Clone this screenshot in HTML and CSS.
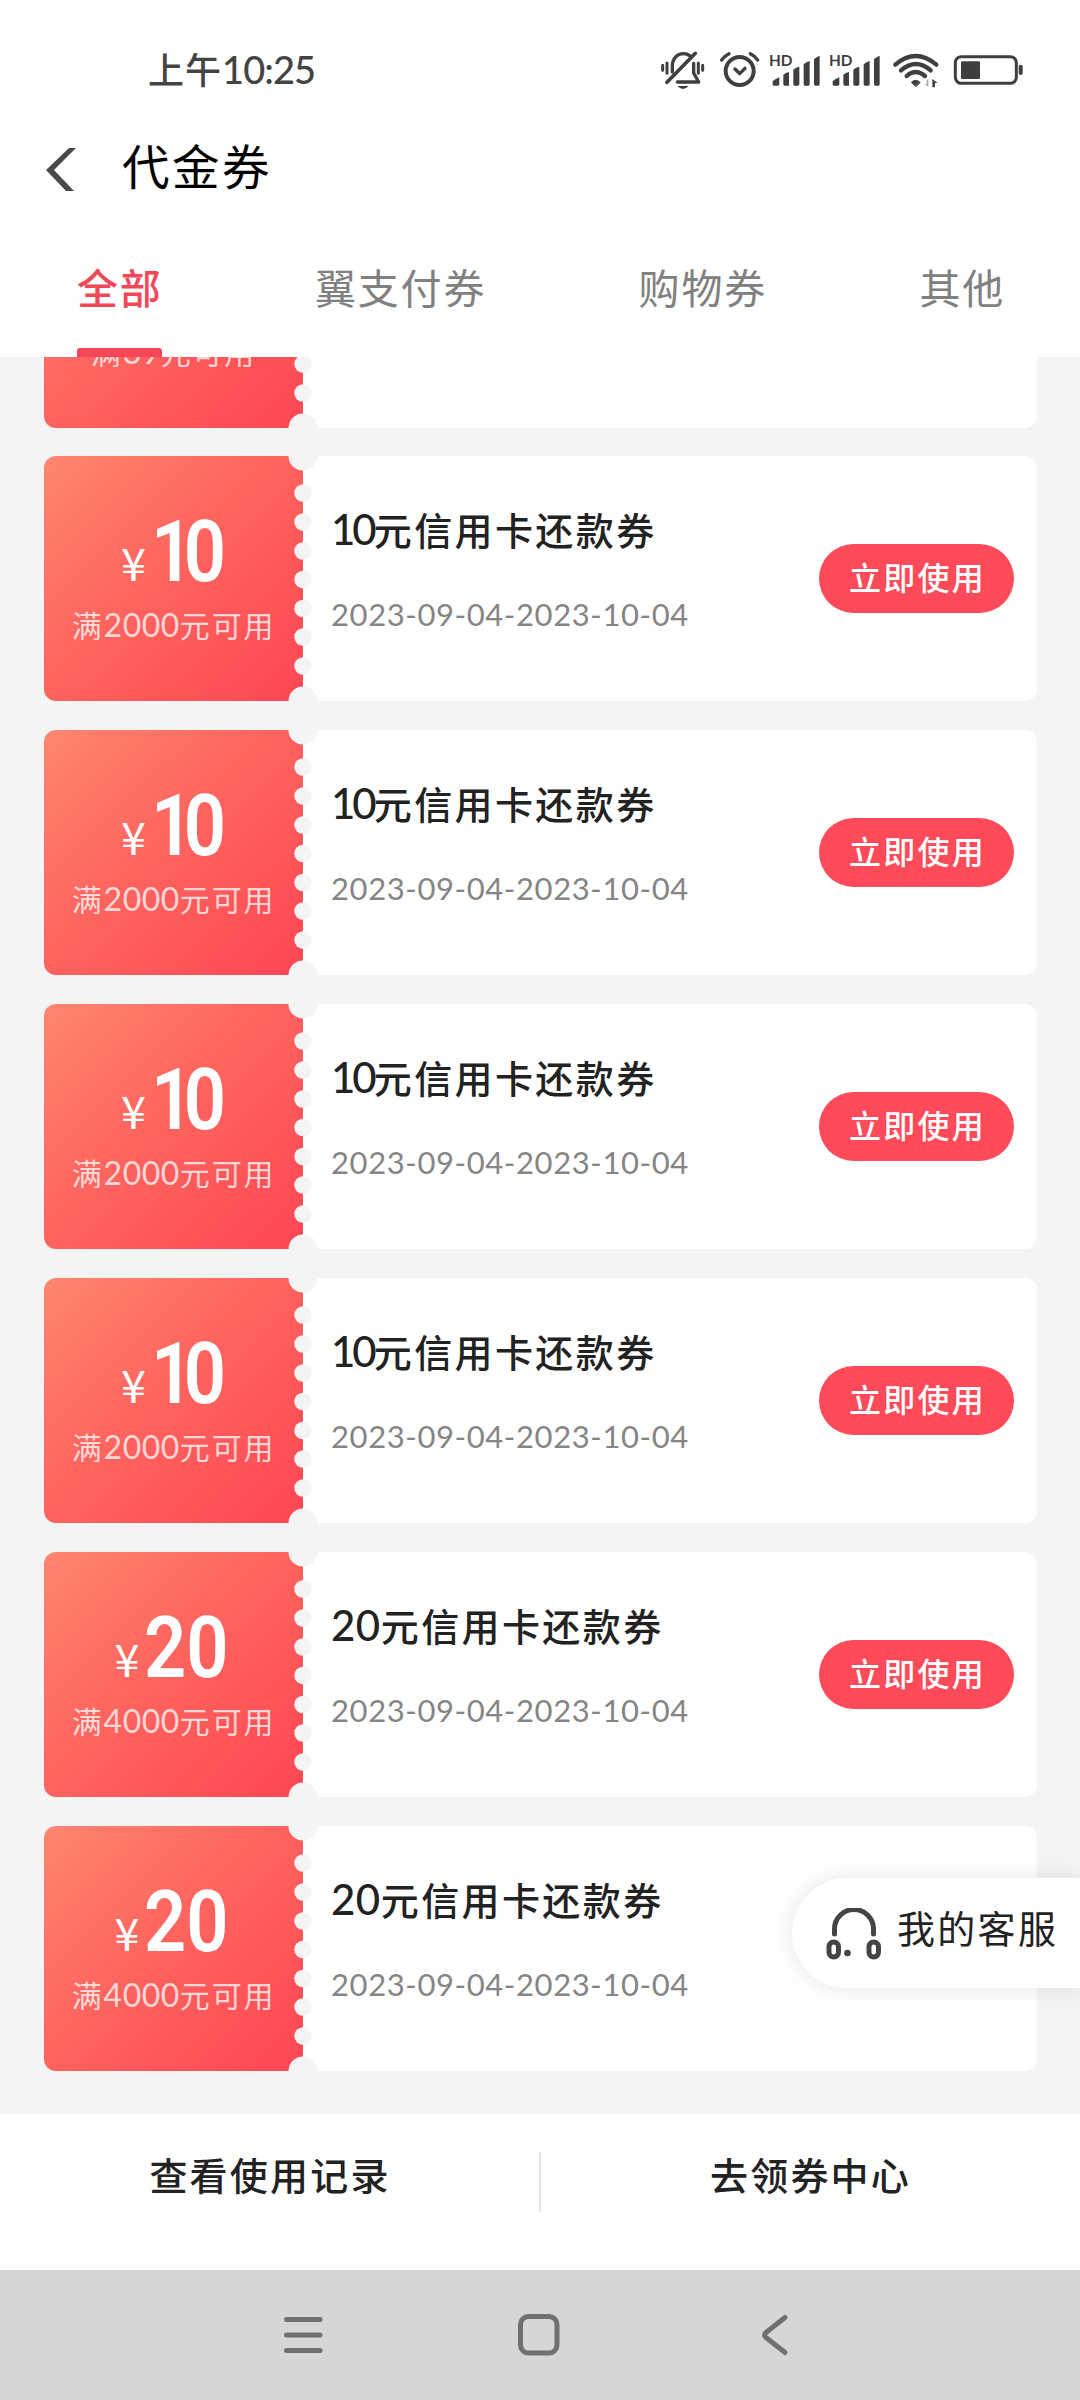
FILE: index.html
```html
<!DOCTYPE html>
<html lang="zh-CN">
<head>
<meta charset="utf-8">
<title>代金券</title>
<link rel="stylesheet" href="styles.css">
</head>
<body>
<div class="screen">
  <header class="status">
    <div class="time">上午<span class="clock">10:25</span></div>
    <svg class="status-icons" viewBox="0 0 1200 240" fill="none" stroke="#3f3f3f" stroke-linecap="round" stroke-linejoin="round">
      <g stroke-width="10">
        <path d="M68 106v15M81 99v31M175 99v31M188 106v15" stroke-width="9"/>
        <path d="M97 126v-18c0-22 14-37 33-37 8 0 14 2 19 6"/>
        <path d="M166 70L81 157" stroke-width="11"/>
        <path d="M161 100v29l15 27h-64"/>
        <path d="M112 168h34q-17 18-34 0z" fill="#3f3f3f" stroke="none"/>
      </g>
      <circle cx="299" cy="123" r="42" stroke-width="12"/>
      <path d="M285 117l14 14 16-16" stroke-width="10"/>
      <path d="M245 90q8-12 22-19M353 90q-8-12-22-19" stroke-width="10"/>
      <g fill="#3f3f3f" stroke="none">
        <g id="signal">
          <text class="hd" x="387" y="107">HD</text>
          <path d="M398 154q8-8 20-12v21q0 4-4 4h-12q-4 0-4-4zM430 134q7-6 17-8v41h-13q-4 0-4-4zM460 119q7-7 18-9v53q0 4-4 4h-10q-4 0-4-4zM491 103q8-8 18-10v70q0 4-4 4h-10q-4 0-4-4zM522 88q7-8 17-11v86q0 4-4 4h-9q-4 0-4-4z"/>
        </g>
        <use href="#signal" x="180"/>
        <path d="M827 169l-13-12q13-13 26 0z" stroke="#3f3f3f" stroke-width="3"/>
        <path d="M865 147v24l-12-9h7v-12z" fill="#aaa"/>
        <path d="M877 172v-25l16 12h-8v13z"/>
      </g>
      <path d="M766 104q61-52 123 0M783 121q45-38 89 0M800 138q27-24 55 0" stroke-width="13"/>
      <rect x="946" y="80" width="183" height="80" rx="18" stroke-width="9"/>
      <rect x="963" y="94" width="57" height="53" rx="4" fill="#3f3f3f" stroke="none"/>
      <path d="M1142 110v19" stroke-width="12"/>
    </svg>
  </header>

  <div class="titlebar">
    <svg class="back" viewBox="0 0 30 44"><path d="M23 0h7L8 22l20 21h-8L0 22z"/></svg>
    <h1>代金券</h1>
  </div>

  <nav class="tabs">
    <a class="tab active">全部</a>
    <a class="tab">翼支付券</a>
    <a class="tab">购物券</a>
    <a class="tab">其他</a>
  </nav>

  <svg class="defs" width="0" height="0">
    <defs>
      <symbol id="perforation" viewBox="0 0 30 245">
        <g fill="#f4f4f4">
          <circle cx="15" cy="0" r="14.5"/><circle cx="15" cy="245" r="14.5"/>
          <circle cx="15" cy="37" r="8.7"/><circle cx="15" cy="66" r="8.7"/>
          <circle cx="15" cy="95" r="8.7"/><circle cx="15" cy="123.500" r="8.7"/>
          <circle cx="15" cy="152.500" r="8.7"/><circle cx="15" cy="181" r="8.7"/>
          <circle cx="15" cy="210" r="8.7"/>
        </g>
      </symbol>
    </defs>
  </svg>

  <main class="list">
    <article class="coupon">
      <div class="value"><div class="amount"></div><div class="cond">满<span>39</span>元可用</div></div>
      <svg class="perf"><use href="#perforation"/></svg>
    </article>
    <article class="coupon ten">
      <div class="value"><div class="amount"><i>¥</i><b>10</b></div><div class="cond">满<span>2000</span>元可用</div></div>
      <svg class="perf"><use href="#perforation"/></svg>
      <div class="info"><h2><span>10</span>元信用卡还款券</h2><p>2023-09-04-2023-10-04</p></div>
      <button class="use">立即使用</button>
    </article>
    <article class="coupon ten">
      <div class="value"><div class="amount"><i>¥</i><b>10</b></div><div class="cond">满<span>2000</span>元可用</div></div>
      <svg class="perf"><use href="#perforation"/></svg>
      <div class="info"><h2><span>10</span>元信用卡还款券</h2><p>2023-09-04-2023-10-04</p></div>
      <button class="use">立即使用</button>
    </article>
    <article class="coupon ten">
      <div class="value"><div class="amount"><i>¥</i><b>10</b></div><div class="cond">满<span>2000</span>元可用</div></div>
      <svg class="perf"><use href="#perforation"/></svg>
      <div class="info"><h2><span>10</span>元信用卡还款券</h2><p>2023-09-04-2023-10-04</p></div>
      <button class="use">立即使用</button>
    </article>
    <article class="coupon ten">
      <div class="value"><div class="amount"><i>¥</i><b>10</b></div><div class="cond">满<span>2000</span>元可用</div></div>
      <svg class="perf"><use href="#perforation"/></svg>
      <div class="info"><h2><span>10</span>元信用卡还款券</h2><p>2023-09-04-2023-10-04</p></div>
      <button class="use">立即使用</button>
    </article>
    <article class="coupon">
      <div class="value"><div class="amount"><i>¥</i><b>20</b></div><div class="cond">满<span>4000</span>元可用</div></div>
      <svg class="perf"><use href="#perforation"/></svg>
      <div class="info"><h2><span>20</span>元信用卡还款券</h2><p>2023-09-04-2023-10-04</p></div>
      <button class="use">立即使用</button>
    </article>
    <article class="coupon">
      <div class="value"><div class="amount"><i>¥</i><b>20</b></div><div class="cond">满<span>4000</span>元可用</div></div>
      <svg class="perf"><use href="#perforation"/></svg>
      <div class="info"><h2><span>20</span>元信用卡还款券</h2><p>2023-09-04-2023-10-04</p></div>
    </article>
  </main>

  <footer class="actions">
    <a>查看使用记录</a>
    <a>去领券中心</a>
  </footer>

  <div class="sysnav">
    <svg viewBox="0 0 1080 130" fill="none" stroke="#707070" stroke-width="5" stroke-linecap="round" stroke-linejoin="round">
      <path d="M286.500 49.500h33.500M286.500 65h33.500M286.500 80.500h33.500"/>
      <rect x="520.500" y="46.500" width="36.500" height="36.500" rx="8"/>
      <path d="M785 47.500L766 62.500q-3 2.500 0 5L785 82.500"/>
    </svg>
  </div>

  <aside class="service">
    <svg viewBox="0 0 56 54" fill="none" stroke="#444" stroke-width="5" stroke-linecap="round">
      <path d="M8.500 26v-5a19.500 19.500 0 0 1 39 0v5"/>
      <rect x="3" y="34" width="9.500" height="15" rx="4.700"/>
      <rect x="43" y="34" width="9.500" height="15" rx="4.700"/>
      <circle cx="21.500" cy="45" r="3.300" fill="#444" stroke="none"/>
    </svg>
    <span>我的客服</span>
  </aside>
</div>
</body>
</html>
```
FILE: styles.css
```css
* { box-sizing: border-box; }
body {
  margin: 0;
  background: #fff;
  font-family: Lato, "Noto Sans CJK SC", sans-serif;
}
h1, h2, p { margin: 0; }
.screen {
  position: relative;
  width: 1080px;
  height: 2400px;
  overflow: hidden;
  display: flex;
  flex-direction: column;
  color: #222;
}
.defs { position: absolute; }

.status {
  height: 110px;
  flex: none;
  display: flex;
  justify-content: space-between;
  padding: 30px 40px 0 148px;
}
.time {
  font-size: 36px;
  line-height: 78px;
  letter-spacing: 1px;
  font-weight: 500;
  color: #444;
  white-space: nowrap;
}
.clock { font-size: 38px; letter-spacing: -0.9px; }
.status-icons { width: 400px; height: 80px; }
.hd { font: 700 46px Lato, sans-serif; }

.titlebar {
  height: 114px;
  flex: none;
  display: flex;
  align-items: center;
  padding-left: 46px;
}
.back { width: 30px; height: 44px; fill: #4a4a4a; margin-top: 5px; }
.titlebar h1 {
  margin-left: 46px;
  font-size: 47.5px;
  line-height: 60px;
  letter-spacing: 2.5px;
  font-weight: 400;
  color: #000;
}

.tabs {
  height: 133px;
  flex: none;
  display: flex;
  justify-content: space-between;
  padding: 0 75px 0 77px;
  background: #fff;
}
.tab {
  position: relative;
  font-size: 41px;
  line-height: 129px;
  letter-spacing: 1.8px;
  color: #808080;
}
.tab.active { color: #f04858; font-weight: 500; }
.tab.active::after {
  content: "";
  position: absolute;
  left: 0;
  right: 1px;
  bottom: 0;
  height: 9px;
  border-radius: 3px 3px 0 0;
  background: #f54758;
}

.list {
  height: 1757px;
  flex: none;
  overflow: hidden;
  background: #f4f4f4;
  padding: 0 43px 0 44px;
  display: flex;
  flex-direction: column;
  gap: 29px;
}
.coupon {
  position: relative;
  flex: none;
  height: 245px;
  display: flex;
  background: #fff;
  border-radius: 12px;
}
.coupon:first-child { margin-top: -174px; margin-bottom: -1px; }
.value {
  width: 259px;
  border-radius: 12px 0 0 12px;
  background: linear-gradient(135deg, #ff866e 0%, #ff6760 42%, #ff4653 100%);
  color: #fff;
  display: flex;
  flex-direction: column;
  align-items: center;
  padding: 56px 3px 0 0;
}
.amount {
  height: 80px;
  display: flex;
  align-items: baseline;
  line-height: 80px;
}
.amount i {
  font: 400 45px/80px "Noto Sans CJK SC", sans-serif;
  margin-right: 5px;
}
.amount b {
  width: 85px;
  font: 600 86px/80px Roboto, sans-serif;
  transform: scaleX(0.86);
  transform-origin: left;
}
.ten .amount b { width: 72px; letter-spacing: -11px; }
.cond {
  margin: 13px 0 0 3px;
  font-size: 30px;
  line-height: 40px;
  letter-spacing: 1.8px;
  color: rgba(255, 255, 255, 0.76);
  white-space: nowrap;
}
.cond span { font-size: 32px; letter-spacing: 0.5px; }
.perf {
  position: absolute;
  left: 243.5px;
  top: 0;
  width: 30px;
  height: 245px;
}
.info { flex: 1; padding: 48px 0 0 28px; }
.info h2 {
  font-size: 38px;
  line-height: 50px;
  letter-spacing: 2.4px;
  font-weight: 500;
  color: #222;
  white-space: nowrap;
}
.info h2 span { font-size: 42px; letter-spacing: 0.5px; }
.ten .info h2 span { letter-spacing: -3px; }
.info p {
  margin-top: 39px;
  font-size: 31px;
  line-height: 40px;
  letter-spacing: 0.6px;
  color: #858585;
}
.use {
  flex: none;
  width: 195px;
  height: 69px;
  margin: 88px 23px 0 0;
  padding: 0 0 2px 2px;
  border: 0;
  border-radius: 35px;
  background: #ff4b59;
  color: #fff;
  font: 500 32px/67px Lato, "Noto Sans CJK SC", sans-serif;
  letter-spacing: 2.2px;
}

.actions {
  height: 156px;
  flex: none;
  display: grid;
  grid-template-columns: 1fr 1fr;
  background: #fff;
}
.actions a {
  height: 60px;
  margin-top: 38px;
  font-size: 38px;
  line-height: 47px;
  letter-spacing: 2.2px;
  font-weight: 500;
  text-align: center;
}
.actions a + a { margin-left: -1px; border-left: 2px solid #e6e6e6; }

.sysnav { height: 130px; flex: none; background: #d6d6d6; }
.sysnav svg { display: block; width: 1080px; height: 130px; }

.service {
  position: absolute;
  right: 0;
  top: 1878px;
  width: 288px;
  height: 110px;
  border-radius: 55px 0 0 55px;
  background: #fff;
  box-shadow: 0 0 24px rgba(0, 0, 0, 0.1);
  display: flex;
  align-items: center;
  padding-left: 34px;
}
.service svg { width: 56px; height: 54px; margin-top: 4px; }
.service span {
  margin: -13px 0 0 15px;
  font-size: 38px;
  letter-spacing: 2.3px;
  white-space: nowrap;
}
```
